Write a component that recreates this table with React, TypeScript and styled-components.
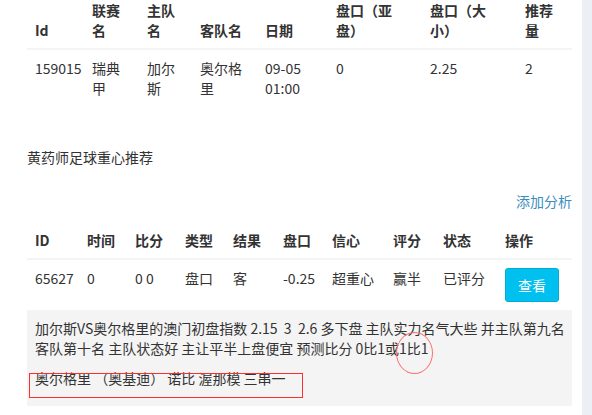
import React from 'react';
import styled, { createGlobalStyle } from 'styled-components';

const GlobalStyle = createGlobalStyle`
  *, *::before, *::after {
    box-sizing: border-box;
  }
  html, body {
    margin: 0;
    padding: 0;
    background: #ecf0f5;
    overflow: hidden;
  }
  body {
    font-family: "Noto Sans CJK SC", "Liberation Sans", sans-serif;
    font-size: 14px;
    color: #333;
    text-spacing-trim: space-all;
  }
`;

// 白色内容区，页面已向下滚动了一点
const Page = styled.div`
  width: 582px;
  min-height: 430px;
  margin-top: -8px;
  padding: 0 10px 0 27px;
  background: #fff;
  display: flex;
  flex-direction: column;
`;

const Table = styled.table<{ $top?: number }>`
  width: 100%;
  border-collapse: collapse;
  table-layout: fixed;
  margin-top: ${(p) => p.$top || 0}px;
`;

const Th = styled.th<{ $w: number }>`
  width: ${(p) => p.$w}px;
  padding: 8px;
  text-align: left;
  vertical-align: bottom;
  font-weight: bold;
  line-height: 20px;
  border-bottom: 2px solid #f4f4f4;
`;

const Td = styled.td`
  padding: 8px;
  vertical-align: top;
  line-height: 20px;
  border-top: 1px solid #f4f4f4;
`;

const Title = styled.div`
  margin-top: 41px;
  line-height: 20px;
`;

const AddLink = styled.a`
  display: block;
  margin-top: 24px;
  text-align: right;
  line-height: 20px;
  color: #3c8dbc;
  text-decoration: none;
`;

const ViewButton = styled.button`
  padding: 6px 12px;
  font-family: inherit;
  font-size: 14px;
  line-height: 20px;
  color: #fff;
  background: #00c0ef;
  border: 1px solid #00acd6;
  border-radius: 3px;
`;

// 分析内容
const Analysis = styled.div`
  position: relative;
  background: #f4f4f4;
  padding: 8px;
  p {
    margin: 0 0 10px;
    line-height: 20px;
    white-space: nowrap;
  }
`;

// 截图上的红色标注
const MarkBox = styled.div`
  position: absolute;
  left: 2px;
  top: 63px;
  width: 274px;
  height: 25px;
  border: 1.5px solid #ff2e2e;
`;

const MarkCircle = styled.div`
  position: absolute;
  left: 369px;
  top: 22px;
  width: 37px;
  height: 42px;
  border: 1px solid #ff6f6f;
  border-radius: 50%;
`;

const matchCols: [string, number][] = [
  ['Id', 57],
  ['联赛名', 55],
  ['主队名', 53],
  ['客队名', 65],
  ['日期', 71],
  ['盘口（亚盘）', 94],
  ['盘口（大小）', 95],
  ['推荐量', 55],
];

const tipCols: [string, number][] = [
  ['ID', 52],
  ['时间', 48],
  ['比分', 50],
  ['类型', 48],
  ['结果', 50],
  ['盘口', 49],
  ['信心', 61],
  ['评分', 50],
  ['状态', 62],
  ['操作', 75],
];

export default function App() {
  return (
    <>
      <GlobalStyle />
      <Page>
        <Table>
          <thead>
            <tr>
              {matchCols.map(([name, w]) => (
                <Th key={name} $w={w}>{name}</Th>
              ))}
            </tr>
          </thead>
          <tbody>
            <tr>
              <Td>159015</Td>
              <Td>瑞典甲</Td>
              <Td>加尔斯</Td>
              <Td>奥尔格里</Td>
              <Td>09-05 01:00</Td>
              <Td>0</Td>
              <Td>2.25</Td>
              <Td>2</Td>
            </tr>
          </tbody>
        </Table>

        <Title>黄药师足球重心推荐</Title>
        <AddLink href="#">添加分析</AddLink>

        <Table $top={11}>
          <thead>
            <tr>
              {tipCols.map(([name, w]) => (
                <Th key={name} $w={w}>{name}</Th>
              ))}
            </tr>
          </thead>
          <tbody>
            <tr>
              <Td>65627</Td>
              <Td>0</Td>
              <Td>0 0</Td>
              <Td>盘口</Td>
              <Td>客</Td>
              <Td>-0.25</Td>
              <Td>超重心</Td>
              <Td>赢半</Td>
              <Td>已评分</Td>
              <Td>
                <ViewButton>查看</ViewButton>
              </Td>
            </tr>
          </tbody>
        </Table>

        <Analysis>
          <p>
            加尔斯VS奥尔格里的澳门初盘指数 2.15 &nbsp;3 &nbsp;2.6 多下盘 主队实力名气大些 并主队第九名
            <br />
            客队第十名 主队状态好 主让平半上盘便宜 预测比分 0比1或1比1
          </p>
          <p>奥尔格里 （奥基迪） 诺比 渥那模 三串一</p>
          <MarkBox />
          <MarkCircle />
        </Analysis>
      </Page>
    </>
  );
}
